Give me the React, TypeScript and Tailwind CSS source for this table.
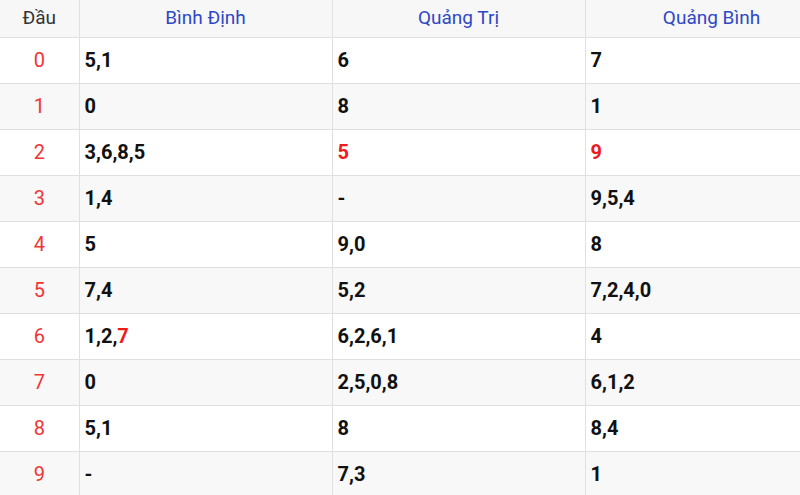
const headers = ["Bình Định", "Quảng Trị", "Quảng Bình"];

// each cell: list of numbers, "*" marks a red one
const rows: string[][] = [
  ["5,1", "6", "7"],
  ["0", "8", "1"],
  ["3,6,8,5", "*5", "*9"],
  ["1,4", "-", "9,5,4"],
  ["5", "9,0", "8"],
  ["7,4", "5,2", "7,2,4,0"],
  ["1,2,*7", "6,2,6,1", "4"],
  ["0", "2,5,0,8", "6,1,2"],
  ["5,1", "8", "8,4"],
  ["-", "7,3", "1"],
];

function Cell({ value }: { value: string }) {
  const parts = value.split(",");
  return (
    <>
      {parts.map((p, i) => (
        <span key={i}>
          {p.startsWith("*") ? <span className="text-[#ee1c1c]">{p.slice(1)}</span> : p}
          {i < parts.length - 1 ? "," : ""}
        </span>
      ))}
    </>
  );
}

export default function App() {
  return (
    <div className="w-[800px] h-[495px] overflow-hidden bg-white" style={{ fontFamily: "Roboto, 'Liberation Sans', sans-serif" }}>
      <table className="w-[838px] table-fixed border-collapse">
        <colgroup>
          <col className="w-[79px]" />
          <col className="w-[253px]" />
          <col className="w-[253px]" />
          <col className="w-[253px]" />
        </colgroup>
        <thead>
          <tr className="h-[37px] bg-[#f7f7f7]">
            <th className="border border-[#e0e0e0] border-t-0 border-l-0 text-[19px] font-normal text-[#333] text-center">Đầu</th>
            {headers.map((h) => (
              <th key={h} className="border border-[#e0e0e0] border-t-0 text-[19px] font-normal text-[#2f48c6] text-center">
                {h}
              </th>
            ))}
          </tr>
        </thead>
        <tbody>
          {rows.map((r, i) => (
            <tr key={i} className={`h-[46px] ${i % 2 === 1 ? "bg-[#f8f8f8]" : "bg-white"}`}>
              <td className="border border-[#e0e0e0] border-l-0 text-center text-[20px] text-[#f03535]">{i}</td>
              {r.map((c, j) => (
                <td key={j} className="border border-[#e0e0e0] pl-[5px] text-[20px] font-bold text-[#111]">
                  <Cell value={c} />
                </td>
              ))}
            </tr>
          ))}
        </tbody>
      </table>
    </div>
  );
}
